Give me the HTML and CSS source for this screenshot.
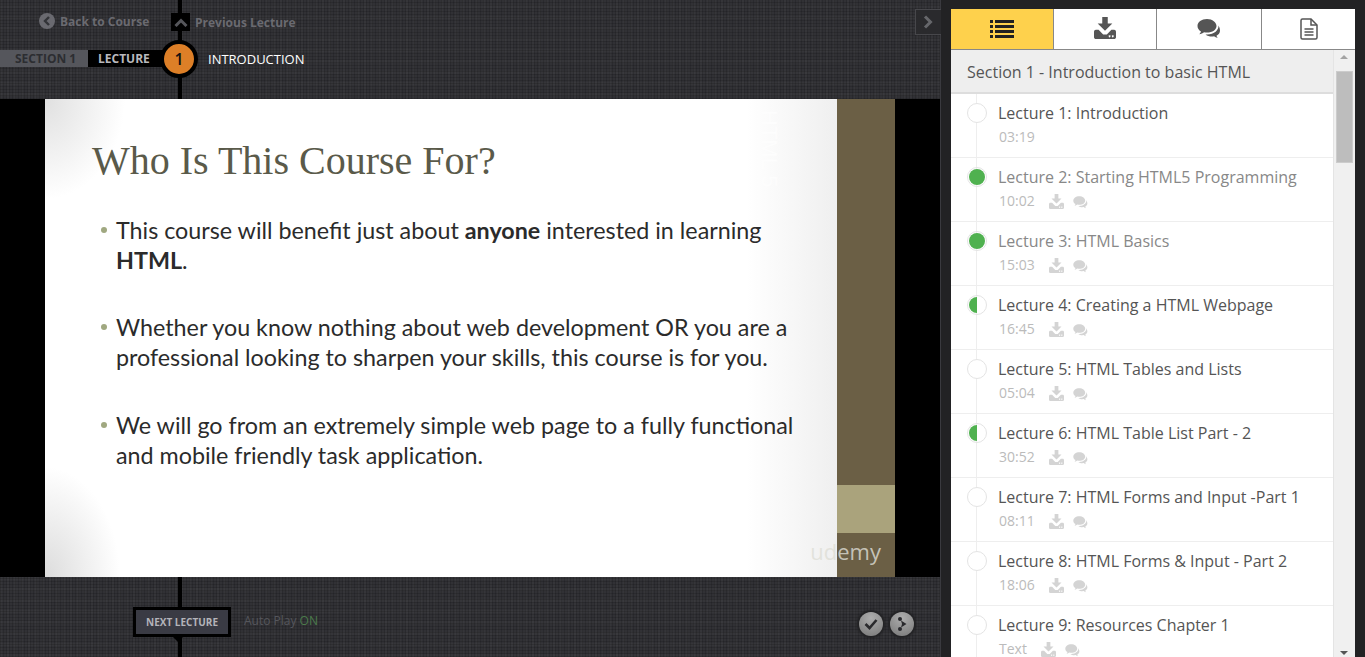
FILE: index.html
```html
<!DOCTYPE html>
<html lang="en">
<head>
    <meta charset="UTF-8">
    <meta name="viewport" content="width=device-width, initial-scale=1.0">
    <title>Introduction</title>
    <link rel="stylesheet" href="styles.css">
</head>
<body>
    <svg class="defs" width="0" height="0">
        <symbol id="i-download" viewBox="0 0 24 24">
            <path d="M9 0h6v7h5l-8 8-8-8h5z"/>
            <path fill-rule="evenodd" d="M2 14h3l5 5h4l5-5h3c1 0 2 1 2 2v6c0 1-1 2-2 2H2c-1 0-2-1-2-2v-6c0-1 1-2 2-2zM17 20a1 1 0 1 0 .01 0zM20.500 20a1 1 0 1 0 .01 0z"/>
        </symbol>
        <symbol id="i-comments" viewBox="0 0 24 24">
            <path d="M10 2C4.500 2 .5 5 .5 9c0 2.300 1.300 4.200 3.500 5.500-.3 1-.9 1.900-1.700 2.700 1.800-.2 3.500-.9 4.700-1.900 1 .2 2 .3 3 .3 5.500 0 9.500-3 9.500-6.600S15.500 2 10 2z"/>
            <path d="M21.500 8.500c.3 4.500-4 9-11.500 9-.5 0-1 0-1.400-.1 1.600 1.400 3.800 2.100 6.400 2.100.7 0 1.400-.1 2-.2 1 .9 2.300 1.500 3.800 1.700-.6-.7-1.100-1.400-1.300-2.300 2-1.100 3.500-2.800 3.500-5 0-2.300-1-4.200-1.500-5.200z"/>
        </symbol>
    </svg>

    <div class="player">
        <div class="timeline timeline-top"></div>
        <div class="topbar">
            <div class="nav-row">
                <a class="back-link">
                    <span class="back-icon">
                        <svg width="8" height="10" viewBox="0 0 8 10"><path d="M6 1L2 5l4 4" fill="none" stroke="#333438" stroke-width="2.400"/></svg>
                    </span>
                    Back to Course
                </a>
                <a class="prev-link">
                    <span class="prev-icon">
                        <svg width="14" height="9" viewBox="0 0 14 9"><path d="M1.500 8L7 2.500 12.500 8" fill="none" stroke="#55565b" stroke-width="3"/></svg>
                    </span>
                    Previous Lecture
                </a>
            </div>
            <div class="crumb-row">
                <span class="crumb-section">SECTION 1</span>
                <span class="crumb-lecture">LECTURE</span>
                <span class="crumb-num">1</span>
                <span class="crumb-title">INTRODUCTION</span>
            </div>
        </div>

        <div class="video">
            <div class="slide">
                <div class="slide-main">
                    <h1 class="slide-title">Who Is This Course For?</h1>
                    <ul class="slide-points">
                        <li>This course will benefit just about <b>anyone</b> interested in learning <b>HTML</b>.</li>
                        <li>Whether you know nothing about web development OR you are a professional looking to sharpen your skills, this course is for you.</li>
                        <li>We will go from an extremely simple web page to a fully functional and mobile friendly task application.</li>
                    </ul>
                    <span class="slide-side">HTML 5</span>
                </div>
                <div class="slide-strip">
                    <div class="strip-band"></div>
                </div>
                <span class="slide-logo">udemy</span>
            </div>
        </div>

        <div class="bottombar">
            <div class="timeline timeline-bottom"></div>
            <div class="next-box">NEXT LECTURE</div>
            <div class="autoplay">Auto Play <span class="on">ON</span></div>
            <div class="round-btns">
                <span class="round-btn">
                    <svg width="14" height="12" viewBox="0 0 14 12"><path d="M1.500 6l4 4 7-8" fill="none" stroke="#2a2a2d" stroke-width="2.600"/></svg>
                </span>
                <span class="round-btn">
                    <svg width="12" height="16" viewBox="0 0 12 16" fill="#2a2a2d"><circle cx="4" cy="3" r="2"/><circle cx="4" cy="13" r="2"/><path d="M5 4.500L10.500 8 5 11.500l1-3.500z"/></svg>
                </span>
            </div>
        </div>

        <div class="collapse-btn">
            <svg width="10" height="14" viewBox="0 0 10 14"><path d="M2 1.500L7.500 7 2 12.500" fill="none" stroke="#66676b" stroke-width="3"/></svg>
        </div>
    </div>

    <div class="sidebar">
        <div class="tabs">
            <div class="tab tab-active">
                <svg width="24" height="20" viewBox="0 0 24 20" fill="#222">
                    <rect x="0" y="1" width="3" height="3"/><rect x="5" y="1" width="19" height="3"/>
                    <rect x="0" y="6" width="3" height="3"/><rect x="5" y="6" width="19" height="3"/>
                    <rect x="0" y="11" width="3" height="3"/><rect x="5" y="11" width="19" height="3"/>
                    <rect x="0" y="16" width="3" height="3"/><rect x="5" y="16" width="19" height="3"/>
                </svg>
            </div>
            <div class="tab"><svg class="tab-icon tab-icon-up" width="22" height="22"><use href="#i-download"/></svg></div>
            <div class="tab tab-wide"><svg class="tab-icon" width="24" height="24"><use href="#i-comments"/></svg></div>
            <div class="tab">
                <svg width="18" height="22" viewBox="0 0 18 22" fill="none" stroke="#555" stroke-width="1.500">
                    <path d="M1 2.500C1 1.500 1.500 1 2.500 1H11l6 6v12.500c0 1-.5 1.500-1.500 1.500h-13c-1 0-1.500-.5-1.500-1.500z"/>
                    <path d="M11 1v6h6M4.500 11h9M4.500 14h9M4.500 17h9"/>
                </svg>
            </div>
        </div>

        <div class="curriculum">
            <div class="curriculum-main">
                <div class="section-head">Section 1 - Introduction to basic HTML</div>
                <ul class="lectures">
                    <li class="lecture">
                        <span class="dot"></span>
                        <div class="lecture-title">Lecture 1: Introduction</div>
                        <div class="lecture-meta"><span class="lecture-time">03:19</span></div>
                    </li>
                    <li class="lecture is-done">
                        <span class="dot dot-full"></span>
                        <div class="lecture-title">Lecture 2: Starting HTML5 Programming</div>
                        <div class="lecture-meta"><span class="lecture-time">10:02</span>
                            <svg class="meta-icon"><use href="#i-download"/></svg><svg class="meta-icon"><use href="#i-comments"/></svg></div>
                    </li>
                    <li class="lecture is-done">
                        <span class="dot dot-full"></span>
                        <div class="lecture-title">Lecture 3: HTML Basics</div>
                        <div class="lecture-meta"><span class="lecture-time">15:03</span>
                            <svg class="meta-icon"><use href="#i-download"/></svg><svg class="meta-icon"><use href="#i-comments"/></svg></div>
                    </li>
                    <li class="lecture">
                        <span class="dot dot-half"></span>
                        <div class="lecture-title">Lecture 4: Creating a HTML Webpage</div>
                        <div class="lecture-meta"><span class="lecture-time">16:45</span>
                            <svg class="meta-icon"><use href="#i-download"/></svg><svg class="meta-icon"><use href="#i-comments"/></svg></div>
                    </li>
                    <li class="lecture">
                        <span class="dot"></span>
                        <div class="lecture-title">Lecture 5: HTML Tables and Lists</div>
                        <div class="lecture-meta"><span class="lecture-time">05:04</span>
                            <svg class="meta-icon"><use href="#i-download"/></svg><svg class="meta-icon"><use href="#i-comments"/></svg></div>
                    </li>
                    <li class="lecture">
                        <span class="dot dot-half"></span>
                        <div class="lecture-title">Lecture 6: HTML Table List Part - 2</div>
                        <div class="lecture-meta"><span class="lecture-time">30:52</span>
                            <svg class="meta-icon"><use href="#i-download"/></svg><svg class="meta-icon"><use href="#i-comments"/></svg></div>
                    </li>
                    <li class="lecture">
                        <span class="dot"></span>
                        <div class="lecture-title">Lecture 7: HTML Forms and Input -Part 1</div>
                        <div class="lecture-meta"><span class="lecture-time">08:11</span>
                            <svg class="meta-icon"><use href="#i-download"/></svg><svg class="meta-icon"><use href="#i-comments"/></svg></div>
                    </li>
                    <li class="lecture">
                        <span class="dot"></span>
                        <div class="lecture-title">Lecture 8: HTML Forms &amp; Input - Part 2</div>
                        <div class="lecture-meta"><span class="lecture-time">18:06</span>
                            <svg class="meta-icon"><use href="#i-download"/></svg><svg class="meta-icon"><use href="#i-comments"/></svg></div>
                    </li>
                    <li class="lecture">
                        <span class="dot"></span>
                        <div class="lecture-title">Lecture 9: Resources Chapter 1</div>
                        <div class="lecture-meta"><span class="lecture-time">Text</span>
                            <svg class="meta-icon"><use href="#i-download"/></svg><svg class="meta-icon"><use href="#i-comments"/></svg></div>
                    </li>
                </ul>
            </div>
            <div class="scroll">
                <span class="scroll-up"></span>
                <div class="scroll-thumb"></div>
                <span class="scroll-down"></span>
            </div>
        </div>
    </div>
</body>
</html>
```

FILE: styles.css
```css
*{
    margin: 0;
    padding: 0;
    box-sizing: border-box;
}
body{
    display: flex;
    height: 657px;
    width: 1365px;
    overflow: hidden;
    background-color: #222224;
    font-family: "Open Sans", "Liberation Sans", sans-serif;
}
.defs{
    position: absolute;
}

/* left side */
.player{
    position: relative;
    display: flex;
    flex-direction: column;
    width: 941px;
    height: 657px;
    border-right: 1px solid #3a3a3f;
    background-color: #313135;
    background-image:
        repeating-linear-gradient(0deg, rgba(0,0,0,0.14) 0 1px, transparent 1px 3px),
        repeating-linear-gradient(90deg, rgba(0,0,0,0.14) 0 1px, transparent 1px 3px),
        repeating-linear-gradient(90deg, rgba(255,255,255,0.02) 0 2px, transparent 2px 7px),
        repeating-linear-gradient(0deg, rgba(255,255,255,0.02) 0 3px, transparent 3px 11px);
}
.timeline{
    position: absolute;
    left: 178px;
    width: 4px;
    background-color: #000;
}
.timeline-top{
    top: 0;
    height: 99px;
}
.timeline-bottom{
    top: 0;
    bottom: 0;
}
.topbar{
    position: relative;
    height: 99px;
    flex: none;
}
.nav-row{
    display: flex;
    height: 50px;
    padding: 13px 0 0 39px;
    font-size: 12px;
    font-weight: 700;
    color: #6a6a70;
}
.back-link{
    display: flex;
    align-items: center;
    gap: 5px;
    width: 132px;
    height: 18px;
    margin-top: -1px;
}
.back-icon{
    display: flex;
    align-items: center;
    justify-content: center;
    width: 16px;
    height: 16px;
    border-radius: 50%;
    background-color: #6a6a70;
}
.prev-link{
    display: flex;
    align-items: center;
    gap: 5px;
    height: 18px;
}
.prev-icon{
    display: flex;
    align-items: center;
    justify-content: center;
    width: 19px;
    height: 18px;
    background-color: #000;
}
.crumb-row{
    display: flex;
    align-items: center;
    height: 17px;
    font-size: 12px;
    font-weight: 700;
}
.crumb-section{
    width: 88px;
    height: 17px;
    padding-left: 15px;
    line-height: 17px;
    background-color: #55565c;
    color: #2c2d31;
}
.crumb-lecture{
    width: 75px;
    height: 17px;
    padding-left: 10px;
    line-height: 17px;
    background-color: #000;
    color: #b9b9bd;
}
.crumb-num{
    position: relative;
    display: flex;
    align-items: center;
    justify-content: center;
    flex: none;
    width: 38px;
    height: 38px;
    margin-left: -3px;
    border: 4px solid #000;
    border-radius: 50%;
    background-color: #dd7f27;
    color: #111;
    font-size: 16px;
    font-weight: 600;
}
.crumb-title{
    margin-left: 10px;
    font-size: 13px;
    font-weight: 400;
    color: #fff;
}

/* video */
.video{
    display: flex;
    height: 478px;
    flex: none;
    padding: 0 45px;
    background-color: #000;
}
.slide{
    position: relative;
    display: flex;
    width: 850px;
    height: 478px;
}
.slide-main{
    position: relative;
    width: 792px;
    padding: 37px 31px 0 47px;
    background-color: #fff;
    background-image:
        radial-gradient(ellipse 80px 100px at 0 0, #e0e0e0, rgba(255,255,255,0)),
        radial-gradient(ellipse 75px 110px at 0 100%, #dcdcdc, rgba(255,255,255,0)),
        linear-gradient(270deg, #efefef, rgba(255,255,255,0) 90px);
    font-family: Lato, "Liberation Sans", sans-serif;
    color: #2b2b2b;
}
.slide-title{
    height: 50px;
    margin-bottom: 28.500px;
    font-family: "Liberation Serif", serif;
    font-size: 40px;
    font-weight: 400;
    line-height: 50px;
    color: #5a5a4a;
}
.slide-points{
    list-style: none;
    padding-left: 24px;
}
.slide-points li{
    position: relative;
    height: 60px;
    margin-bottom: 37.500px;
    font-size: 23.300px;
    line-height: 30px;
}
.slide-points li::before{
    content: "";
    position: absolute;
    left: -15px;
    top: 12px;
    width: 6px;
    height: 6px;
    border-radius: 50%;
    background-color: #a0a880;
}
.slide-side{
    position: absolute;
    right: 55px;
    top: 11px;
    transform-origin: top right;
    transform: rotate(90deg) translateX(100%);
    font-family: "Liberation Sans", sans-serif;
    font-size: 22px;
    color: #fff;
    opacity: 0.6;
}
.slide-strip{
    width: 58px;
    height: 478px;
    padding-top: 386px;
    background-color: #6b5f45;
}
.strip-band{
    height: 48px;
    background-color: #aaa37c;
}
.slide-logo{
    position: absolute;
    right: 14px;
    bottom: 13px;
    font-family: "Open Sans", sans-serif;
    font-size: 22px;
    line-height: 26px;
    color: rgba(222, 222, 214, 0.8);
}

/* bottom */
.bottombar{
    position: relative;
    display: flex;
    align-items: flex-start;
    flex: 1;
    padding: 30px 26px 0 133px;
}
.next-box{
    position: relative;
    width: 98px;
    height: 30px;
    border: 3px solid #000;
    background-color: #3a3b44;
    color: #b4b4ba;
    font-size: 10px;
    font-weight: 700;
    line-height: 24px;
    text-align: center;
}
.next-box::after{
    content: "";
    position: absolute;
    left: 37px;
    bottom: -8px;
    border: 5px solid transparent;
    border-bottom-width: 0;
    border-top-color: #000;
}
.autoplay{
    margin: 5px 0 0 13px;
    font-size: 12px;
    color: #55565c;
}
.autoplay .on{
    color: #4b7a4b;
}
.round-btns{
    display: flex;
    gap: 7px;
    margin: 5px 0 0 auto;
}
.round-btn{
    display: flex;
    align-items: center;
    justify-content: center;
    width: 24px;
    height: 24px;
    border-radius: 50%;
    box-shadow: 0 0 2px 2px #222224;
    background: radial-gradient(circle at 50% 25%, #adadad, #787878);
}
.collapse-btn{
    position: absolute;
    top: 9px;
    right: -1px;
    display: flex;
    align-items: center;
    justify-content: center;
    width: 26px;
    height: 26px;
    padding-right: 2px;
    border: 1px solid #47474b;
    border-right: none;
    background-color: #2a2a2d;
}

/* right side */
.sidebar{
    width: 404px;
    margin: 9px 10px 0 10px;
    flex: none;
}
.tabs{
    display: flex;
    height: 41px;
    background-color: #fff;
    border-bottom: 1px solid #888;
}
.tab{
    display: flex;
    align-items: center;
    justify-content: center;
    width: 103px;
    border-right: 1px solid #888;
}
.tab-wide{
    width: 105px;
}
.tab:last-child{
    flex: 1;
    border-right: none;
}
.tab-active{
    background-color: #fed14c;
}
.tab-icon{
    fill: #555;
}
.tab-icon-up{
    margin-bottom: 3px;
}
.curriculum{
    display: flex;
    height: 607px;
}
.curriculum-main{
    width: 383px;
    background-color: #fff;
    border-right: 1px solid #e4e4e4;
    overflow: hidden;
}
.section-head{
    height: 44px;
    padding-left: 16px;
    border-bottom: 2px solid #ddd;
    background-color: #eee;
    color: #555;
    font-size: 16px;
    line-height: 44px;
}
.lectures{
    list-style: none;
}
.lecture{
    position: relative;
    height: 64px;
    padding: 8px 0 0 47px;
    border-bottom: 1px solid #eee;
}
.lecture::before{
    content: "";
    position: absolute;
    left: 25px;
    top: 0;
    bottom: 0;
    width: 1px;
    background-color: #eee;
}
.dot{
    position: absolute;
    left: 16px;
    top: 9px;
    width: 20px;
    height: 20px;
    border: 1px solid #e4e4e4;
    border-radius: 50%;
    background-color: #fff;
}
.dot-full,
.dot-half{
    background-clip: content-box;
    padding: 1px;
}
.dot-full{
    background-color: #4fb14f;
}
.dot-half{
    background-color: transparent;
    background-image: linear-gradient(90deg, #4fb14f 50%, #fff 50%);
}
.lecture-title{
    height: 22px;
    font-size: 16px;
    line-height: 22px;
    color: #555;
}
.is-done .lecture-title{
    color: #888;
}
.lecture-meta{
    display: flex;
    align-items: center;
    gap: 14px;
    height: 24px;
    padding-left: 1px;
}
.lecture-time{
    font-size: 14px;
    color: #bbb;
}
.meta-icon{
    width: 15px;
    height: 15px;
    margin-top: 3px;
    fill: #d4d4d4;
}
.meta-icon + .meta-icon{
    margin-left: -5px;
    margin-top: 4px;
}
.scroll{
    position: relative;
    flex: 1;
    background-color: #f0f0f0;
}
.scroll-up,
.scroll-down{
    position: absolute;
    left: 6px;
    border: 4px solid transparent;
}
.scroll-up{
    top: 5px;
    border-top-width: 0;
    border-bottom-color: #a3a3a3;
}
.scroll-down{
    bottom: 2px;
    border-bottom-width: 0;
    border-top-color: #555;
}
.scroll-thumb{
    position: absolute;
    left: 2px;
    top: 21px;
    width: 17px;
    height: 92px;
    background-color: #bdbdbd;
    border: 1px solid #ccc;
}
```
